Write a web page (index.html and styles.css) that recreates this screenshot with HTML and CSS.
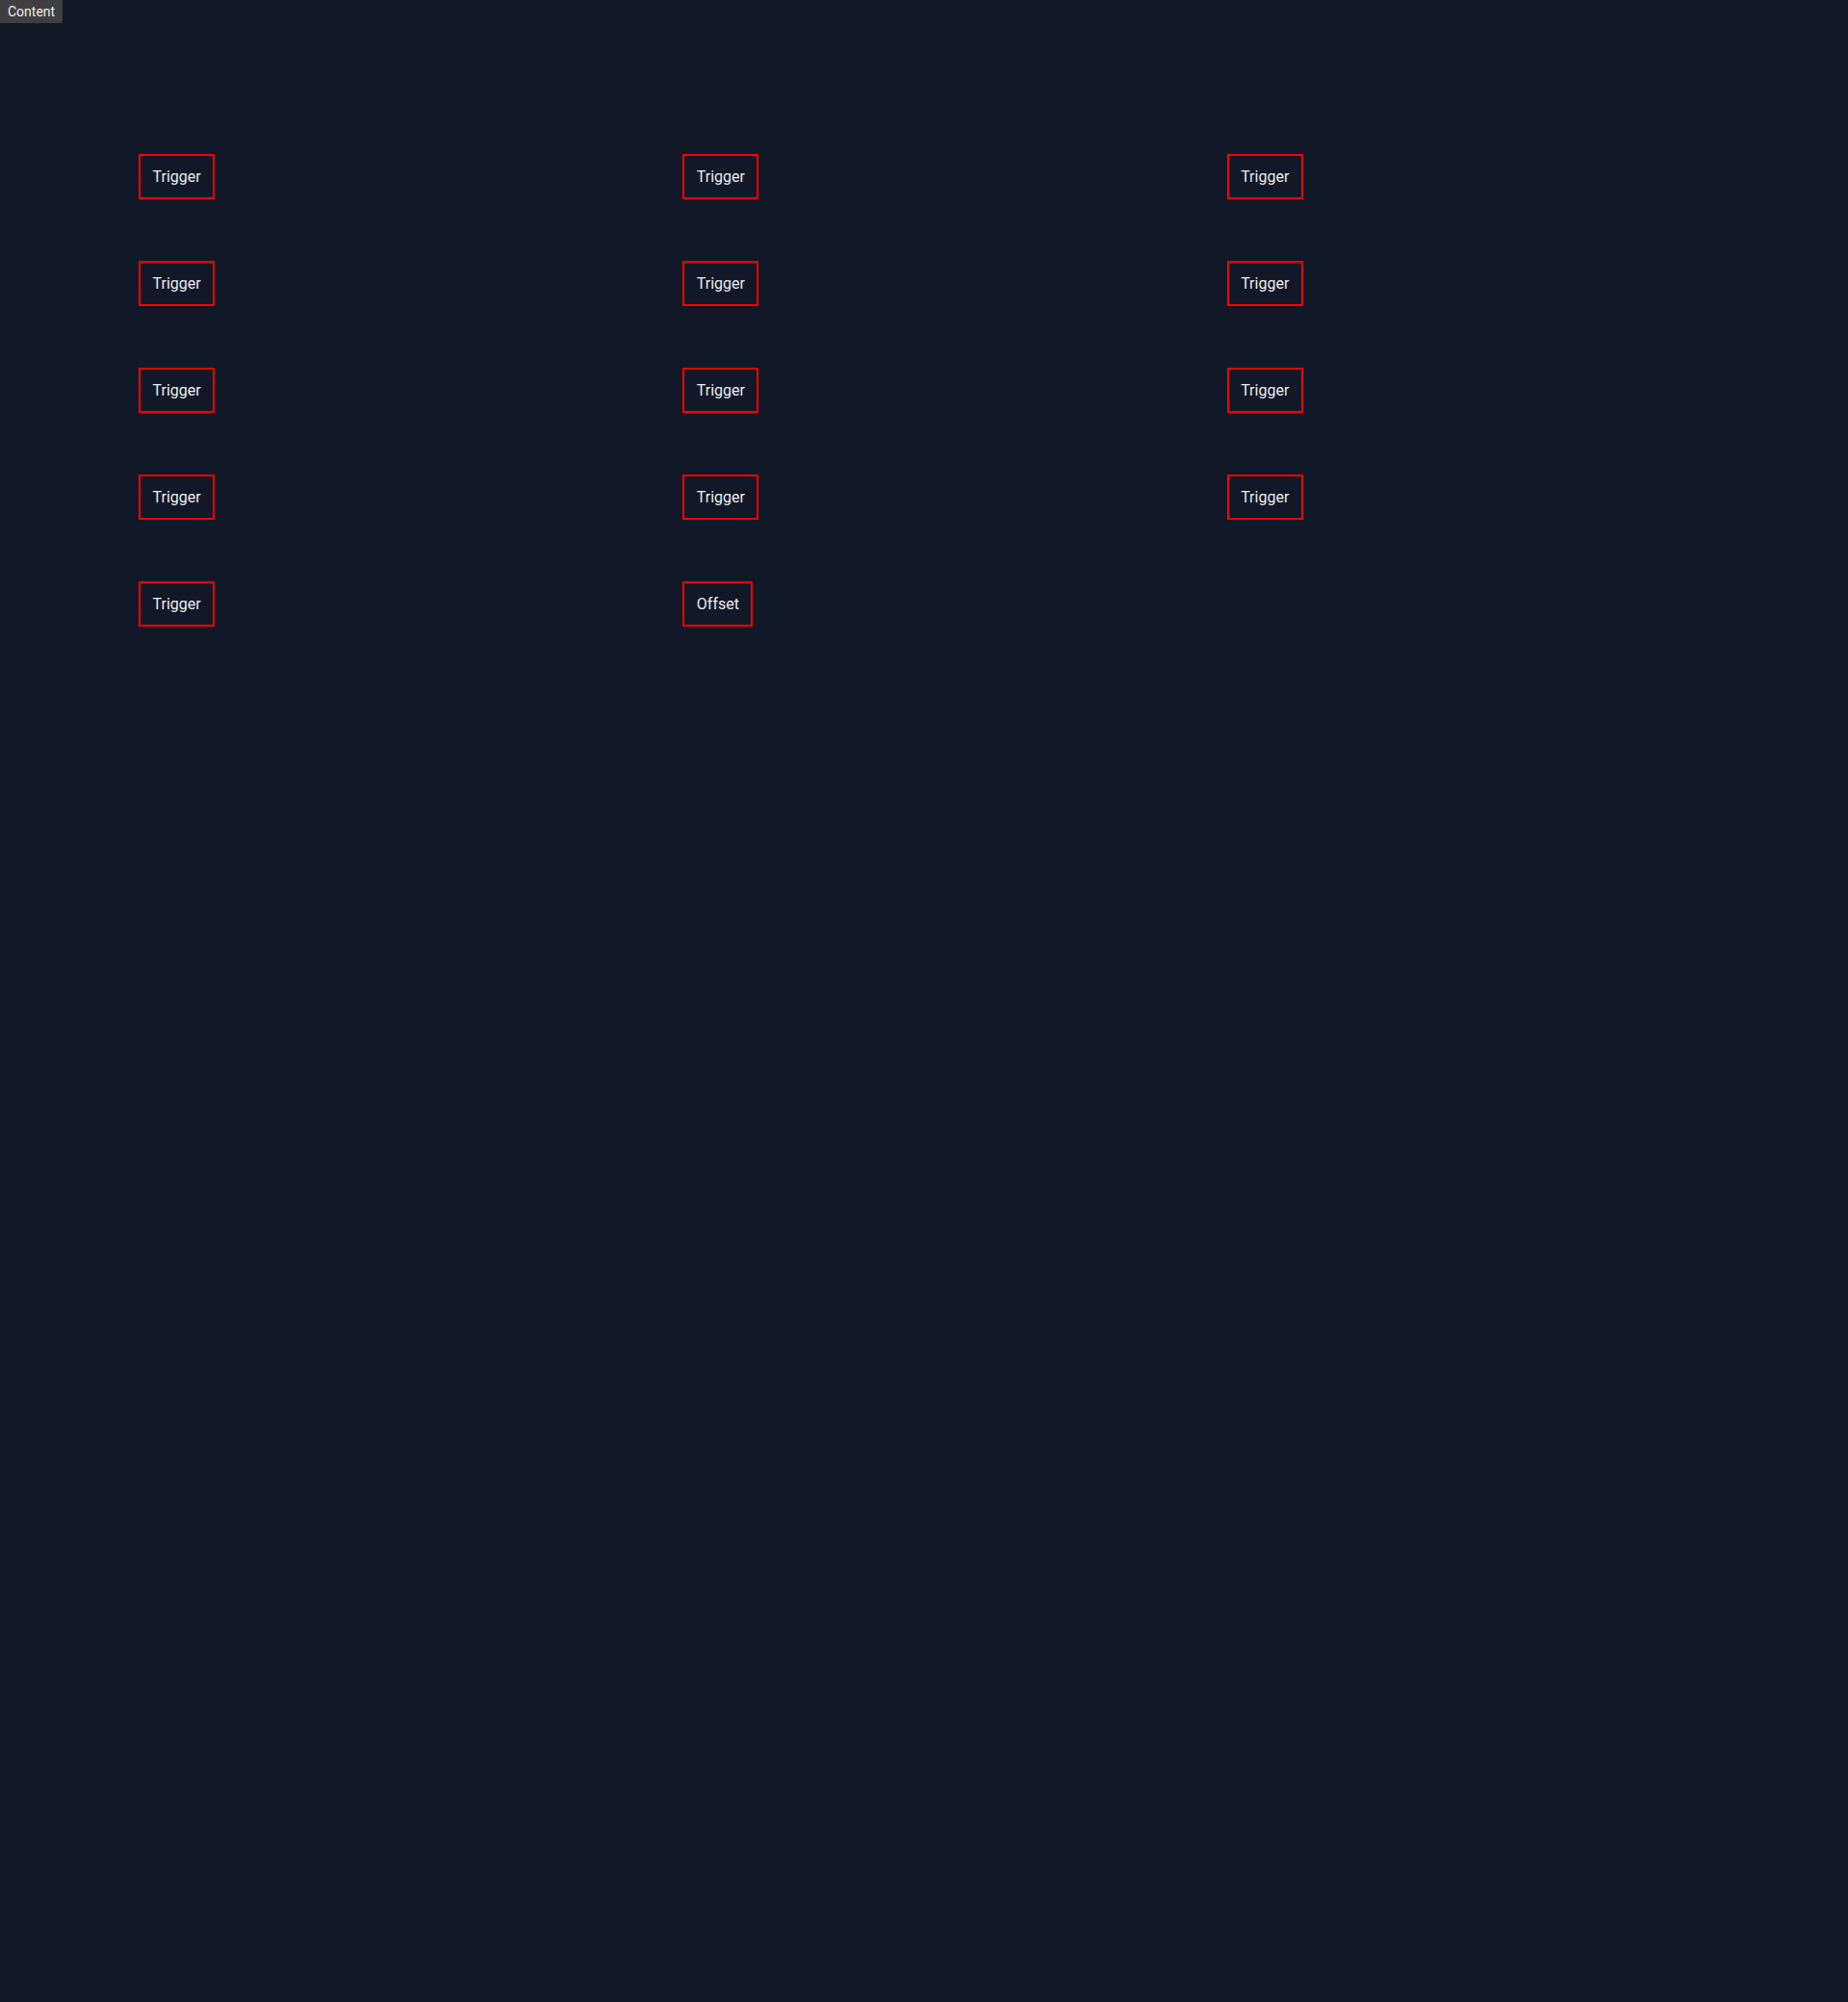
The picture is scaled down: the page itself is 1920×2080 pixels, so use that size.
FILE: index.html
```html
<!DOCTYPE html>
<html lang="en">
<head>
<meta charset="utf-8">
<title>Tooltip positions</title>
<link rel="stylesheet" href="styles.css">
</head>
<body>
<div class="tooltip">Content</div>
<main class="grid">
  <button class="trigger">Trigger</button>
  <button class="trigger">Trigger</button>
  <button class="trigger">Trigger</button>
  <button class="trigger">Trigger</button>
  <button class="trigger">Trigger</button>
  <button class="trigger">Trigger</button>
  <button class="trigger">Trigger</button>
  <button class="trigger">Trigger</button>
  <button class="trigger">Trigger</button>
  <button class="trigger">Trigger</button>
  <button class="trigger">Trigger</button>
  <button class="trigger">Trigger</button>
  <button class="trigger">Trigger</button>
  <button class="trigger">Offset</button>
</main>
</body>
</html>
```

FILE: styles.css
```css
html, body {
  margin: 0;
  padding: 0;
  background: #111827;
  min-height: 2080px;
  font-family: Roboto, "Liberation Sans", sans-serif;
}

.tooltip {
  position: absolute;
  top: 0;
  left: 0;
  background: #3f3f42;
  color: #ececec;
  font-size: 14px;
  line-height: 16px;
  padding: 4px 8px;
}

.grid {
  display: grid;
  grid-template-columns: repeat(3, 1fr);
  row-gap: 64px;
  justify-items: start;
  align-items: start;
  padding: 160px 80px 0 144px;
}

.trigger {
  font-family: Roboto, "Liberation Sans", sans-serif;
  font-size: 16px;
  line-height: normal;
  color: #ebebeb;
  background: transparent;
  border: 2px solid #ff0000;
  border-radius: 0;
  padding: 12px 12.5px;
  margin: 0;
}
```
